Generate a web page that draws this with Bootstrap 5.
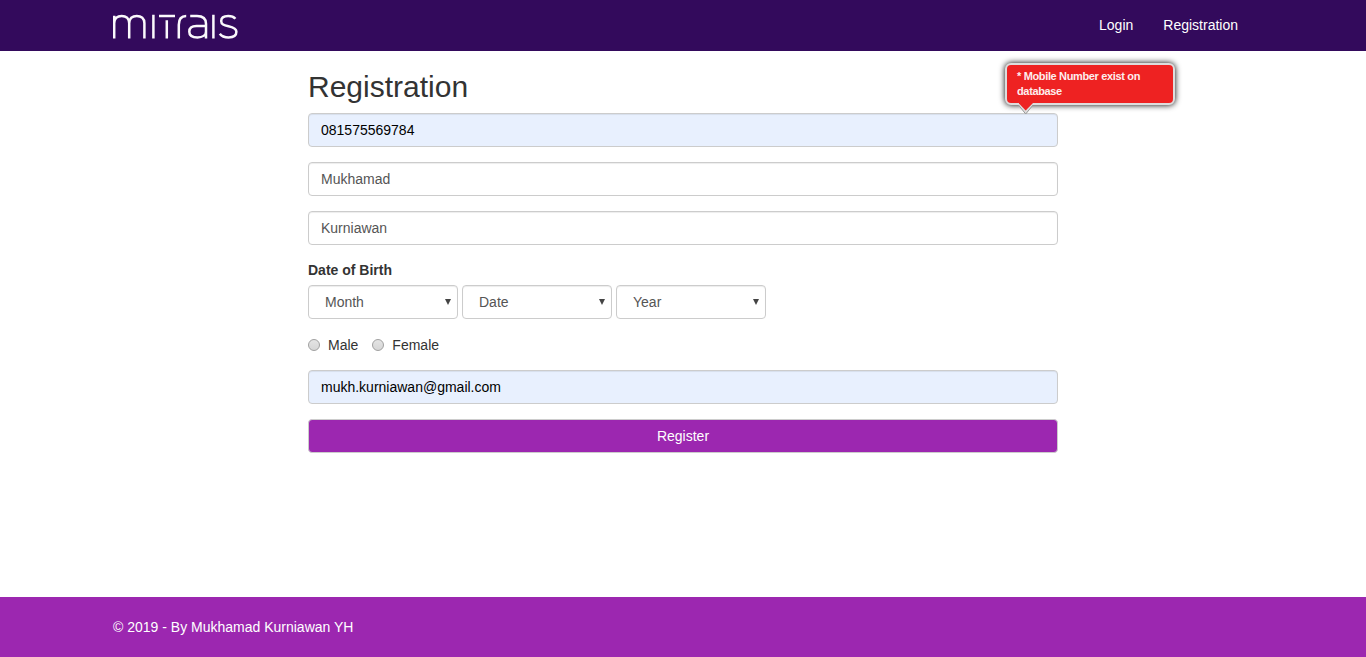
<!DOCTYPE html>
<html lang="en">
<head>
<meta charset="utf-8">
<meta name="viewport" content="width=device-width, initial-scale=1">
<title>Registration</title>
<link rel="stylesheet" href="https://cdn.jsdelivr.net/npm/bootstrap@5.3.0/dist/css/bootstrap.min.css">
<style>
body { font: 14px/20px "Liberation Sans", Arial, sans-serif; color: #333; background: #fff; }
.page-width { width: 1170px; max-width: 1170px; padding: 0 15px; }
.topbar { background: #330a5c; height: 51px; padding: 0; }
.topbar .nav-link { color: #fff; padding: 14px 15px 16px; line-height: 20px; }
.brand-logo { width: 126px; height: 30px; fill: none; stroke: #fbf9fc; stroke-width: 2.5; }
.form-column { width: 750px; }
h2 { font-size: 30px; font-weight: 400; line-height: 33px; margin: 19px 0 10px; }
.form-control, .form-select {
  height: 34px; padding: 6px 12px; font-size: 14px; line-height: 20px; color: #555;
  border: 1px solid #ccc; border-radius: 4px; box-shadow: inset 0 1px 1px rgba(0,0,0,.075);
}
.form-control.autofilled { background: #e8f0fe; color: #000; }
.field { margin-bottom: 15px; }
.birth-label { margin-bottom: 5px; }
.form-select {
  width: 150px; padding-left: 16px;
  background: #fff url("data:image/svg+xml,%3Csvg xmlns='http://www.w3.org/2000/svg' width='6' height='6'%3E%3Cpath d='M0 0h6L3 6z' fill='%23444'/%3E%3C/svg%3E") no-repeat right 6px top 13px;
  background-size: 6px 6px;
}
.gender-row { gap: 14px; }
.form-check-input[type=radio] {
  width: 12px; height: 12px; margin: 0 8px 0 0; border: 1px solid #a0a0a0;
  background: linear-gradient(#e4e4e4, #d6d6d6);
}
.btn-register { height: 34px; padding: 6px 12px; font-size: 14px; line-height: 20px; color: #fff; background: #9c27b0; border: 1px solid #ccc; border-radius: 4px; }
.btn-register:hover { color: #fff; background: #86219a; }
.site-footer { height: 60px; background: #9c27b0; color: #fff; }
.error-prompt { left: 697px; top: -50px; width: 170px; }
.error-text {
  height: 42px; padding: 4px 10px; font-size: 11px; font-weight: 700; line-height: 15px; color: #fdeeee; letter-spacing: -.35px;
  background: #ee2222; border: 2px solid #ddd; border-radius: 6px; box-shadow: 0 0 6px #000;
}
.error-arrow { left: 11px; top: 39px; width: 20px; height: 13px; }
</style>
</head>
<body class="d-flex flex-column min-vh-100">
<nav class="navbar topbar">
  <div class="container page-width d-flex flex-nowrap justify-content-between">
    <a href="#" class="d-flex" aria-label="Mitrais">
      <svg class="brand-logo" viewBox="0 -.7 126 30">
        <path d="M1.2 26.7V4M1.2 11.5C1.2 6.8 4.4 4.2 8.7 4.2S16.2 6.8 16.2 11.5V26.7M16.2 11.5C16.2 6.8 19.4 4.2 23.8 4.2S31.4 6.8 31.4 11.5V26.7"/>
        <path d="M40.4 3V26.7M46 4.2H62M53.8 8.5V26.7M65.8 26.7V13C65.8 7 68.3 4.2 73.2 4.2"/>
        <path d="M77.2 4.2H84C90 4.2 93 6.8 93 12V26.7M93 20C93 23.4 89.5 25.7 84.5 25.7C79 25.7 76.3 23.5 76.3 20C76.3 16.4 79 14.4 83.5 14.4H93M100.4 3V26.7"/>
        <path d="M122.4 7C120.8 5 118.2 4.2 115.2 4.2C110.8 4.2 108.2 6 108.2 9.2C108.2 12.7 110.8 13.5 115.5 14.5C120.6 15.6 123.4 16.8 123.4 20.1C123.4 23.7 120.2 25.7 115.6 25.7C111.5 25.7 108.6 24.6 106.8 22"/>
      </svg>
    </a>
    <div class="nav flex-nowrap">
      <a class="nav-link" href="#">Login</a>
      <a class="nav-link" href="#">Registration</a>
    </div>
  </div>
</nav>

<main class="form-column mx-auto flex-grow-1">
  <h2>Registration</h2>
  <form>
    <div class="field position-relative">
      <input class="form-control autofilled" type="text" value="081575569784" aria-label="Mobile number">
      <div class="error-prompt position-absolute">
        <div class="error-text">* Mobile Number exist on<br>database</div>
        <svg class="error-arrow position-absolute" viewBox="0 0 20 13">
          <path d="M2.5 3L9.7 12L17 3" fill="#ddd" stroke="#999" stroke-width="1"/>
          <path d="M3 0H16.5V1.5L9.7 8.5L3 1.5Z" fill="#e22"/>
        </svg>
      </div>
    </div>
    <div class="field"><input class="form-control" type="text" value="Mukhamad" aria-label="First name"></div>
    <div class="field"><input class="form-control" type="text" value="Kurniawan" aria-label="Last name"></div>
    <div class="mb-3">
      <label class="birth-label fw-bold d-block" for="month">Date of Birth</label>
      <div class="d-flex gap-1">
        <select class="form-select" id="month"><option>Month</option></select>
        <select class="form-select" aria-label="Date"><option>Date</option></select>
        <select class="form-select" aria-label="Year"><option>Year</option></select>
      </div>
    </div>
    <div class="field gender-row d-flex align-items-center">
      <label class="d-flex align-items-center"><input class="form-check-input" type="radio" name="gender">Male</label>
      <label class="d-flex align-items-center"><input class="form-check-input" type="radio" name="gender">Female</label>
    </div>
    <div class="field"><input class="form-control autofilled" type="email" value="mukh.kurniawan@gmail.com" aria-label="Email"></div>
    <button class="btn btn-register w-100" type="button">Register</button>
  </form>
</main>

<footer class="site-footer d-flex align-items-center">
  <div class="container page-width">© 2019 - By Mukhamad Kurniawan YH</div>
</footer>
<script src="https://cdn.jsdelivr.net/npm/bootstrap@5.3.0/dist/js/bootstrap.bundle.min.js"></script>
</body>
</html>
